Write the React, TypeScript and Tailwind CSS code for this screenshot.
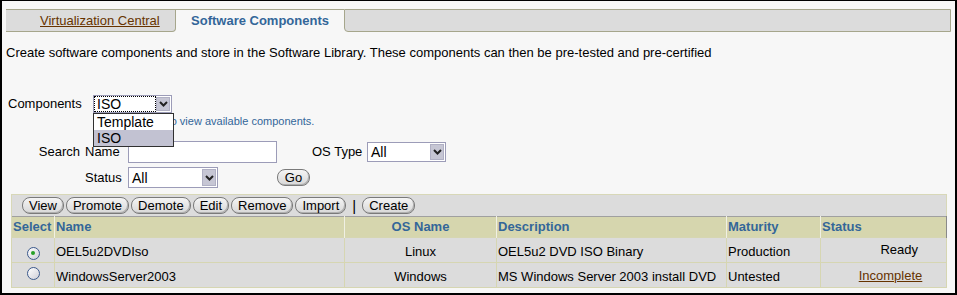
import React from 'react'

const font = { fontFamily: '"Liberation Sans", Arial, sans-serif' }

function Chevron() {
  return (
    <svg width="9" height="6" viewBox="0 0 9 6">
      <path d="M1 1 L4.5 4.5 L8 1" fill="none" stroke="#222" strokeWidth="2" />
    </svg>
  )
}

function FakeSelect({ value, w, h, focused }: { value: string; w: string; h: string; focused?: boolean }) {
  return (
    <div className={`flex border border-[#9c9cb8] bg-white ${w} ${h}`}>
      <div className={`flex flex-1 items-center pl-[3px] text-[14px] leading-none ${focused ? 'outline outline-1 outline-dotted outline-black -outline-offset-1' : ''}`}>
        {value}
      </div>
      <div className="my-[1px] mr-[1px] flex w-[14px] items-center justify-center border border-[#b0b0c4] bg-[#c6c6d4]">
        <Chevron />
      </div>
    </div>
  )
}

function Btn({ label }: { label: string }) {
  return (
    <button className="h-[17px] rounded-[8px] border border-[#7a7a7a] bg-gradient-to-b from-[#f4f4f4] to-[#d8d8d8] px-[6px] text-[13px] leading-none text-black shadow-[inset_-1px_-1px_0_#b0b0b0]">
      {label}
    </button>
  )
}

function Radio({ on }: { on?: boolean }) {
  return (
    <span className="inline-flex h-[13px] w-[13px] items-center justify-center rounded-full border border-[#3c5a8c] bg-gradient-to-br from-white to-[#cfcfd8]">
      {on && <span className="h-[4px] w-[4px] rounded-full bg-[#28a028]" />}
    </span>
  )
}

const rows = [
  { name: 'OEL5u2DVDIso', os: 'Linux', desc: 'OEL5u2 DVD ISO Binary', mat: 'Production', status: 'Ready', on: true },
  { name: 'WindowsServer2003', os: 'Windows', desc: 'MS Windows Server 2003 install DVD', mat: 'Untested', status: 'Incomplete' },
]

export default function App() {
  return (
    <div
      style={font}
      className="h-[295px] w-[957px] overflow-hidden border-t border-r-2 border-b-2 border-l-2 border-black bg-[#f7f7f7] text-[13px] text-black"
    >
      {/* tabs */}
      <div className="ml-[4px] mr-[4px] mt-[8px] flex h-[23px]">
        <div className="flex w-[170px] items-center rounded-br-[4px] border-t border-r border-b border-[#a6a68c] bg-[#dcdcdc] pl-[34px] text-[13px] text-[#663300] underline">
          Virtualization Central
        </div>
        <div className="flex w-[168px] items-center justify-center border-t border-[#a6a68c] text-[13px] font-bold text-[#336699]">
          Software Components
        </div>
        <div className="flex-1 rounded-bl-[4px] border border-[#a6a68c] bg-[#dcdcdc]" />
      </div>

      <p className="ml-[4px] mt-[13px] leading-[15px]">
        Create software components and store in the Software Library. These components can then be pre-tested and pre-certified
      </p>

      {/* components selector */}
      <div className="ml-[6px] mt-[35px] flex h-[18px] items-center">
        <span className="w-[85px]">Components</span>
        <div className="relative">
          <FakeSelect value="ISO" w="w-[79px]" h="h-[18px]" focused />
          <div className="absolute left-0 top-[18px] z-10 w-[81px] border border-[#303030] bg-white text-[14px] leading-[16px]">
            <div className="pl-[3px]">Template</div>
            <div className="bg-[#c2c2d2] pl-[3px]">ISO</div>
          </div>
        </div>
      </div>
      <div className="ml-[132px] mt-[2px] text-[11px] leading-[13px] text-[#336699]">
        Select to view available components.
      </div>

      {/* search */}
      <div className="mt-[13px] flex h-[22px] items-center">
        <span className="w-[78px] text-right">Search</span>
        <span className="ml-[5px] w-[43px]">Name</span>
        <input className="h-[22px] w-[149px] border border-[#9c9cb8] bg-white" />
        <span className="ml-[35px] w-[55px]">OS Type</span>
        <FakeSelect value="All" w="w-[79px]" h="h-[20px]" />
      </div>
      <div className="mt-[4px] flex h-[21px] items-center">
        <span className="ml-[83px] w-[43px]">Status</span>
        <FakeSelect value="All" w="w-[90px]" h="h-[21px]" />
        <div className="ml-[59px]">
          <button className="h-[17px] w-[33px] rounded-[8px] border border-[#7a7a7a] bg-gradient-to-b from-[#f4f4f4] to-[#d8d8d8] text-[13px] leading-none shadow-[inset_-1px_-1px_0_#b0b0b0]">
            Go
          </button>
        </div>
      </div>

      {/* table */}
      <div className="ml-[9px] mt-[6px] w-[936px]">
        <div className="flex h-[22px] items-center gap-[2px] border-x border-t border-[#d8d8b8] bg-[#dcdcdc] pl-[10px]">
          <Btn label="View" />
          <Btn label="Promote" />
          <Btn label="Demote" />
          <Btn label="Edit" />
          <Btn label="Remove" />
          <Btn label="Import" />
          <span className="mx-[4px] text-[15px] leading-none">|</span>
          <Btn label="Create" />
        </div>
        <table className="w-full border-collapse">
          <thead>
            <tr className="h-[21px] border-t border-b border-[#a0a0a0] bg-[#d6d6ae] text-left text-[13px] font-bold text-[#336699]">
              <th className="w-[43px] border-l border-[#d8d8b8] pl-[1px] text-left">Select</th>
              <th className="w-[290px] border-l border-[#f0f0e4] pl-[1px] text-left">Name</th>
              <th className="w-[152px] border-l border-[#f0f0e4] text-center">OS Name</th>
              <th className="w-[230px] border-l border-[#f0f0e4] pl-[1px] text-left">Description</th>
              <th className="w-[94px] border-l border-[#f0f0e4] pl-[1px] text-left">Maturity</th>
              <th className="border-l border-r border-[#f0f0e4] border-r-[#8a8a8a] pl-[1px] text-left">Status</th>
            </tr>
          </thead>
          <tbody>
            {rows.map((r) => (
              <tr key={r.name} className="h-[25px] bg-[#dcdcdc]">
                <td className="border border-[#d6d6b2] text-center">
                  <span className="relative top-[1px]"><Radio on={r.on} /></span>
                </td>
                <td className="border border-[#d6d6b2] pl-[1px] pt-[3px]">{r.name}</td>
                <td className="border border-[#d6d6b2] pt-[3px] text-center">{r.os}</td>
                <td className="border border-[#d6d6b2] pl-[1px] pt-[3px]">{r.desc}</td>
                <td className="border border-[#d6d6b2] pl-[1px] pt-[3px]">{r.mat}</td>
                <td className="border border-[#d6d6b2]">
                  {r.status === 'Ready' ? (
                    <div className="pr-[28px] text-right">Ready</div>
                  ) : (
                    <div className="pl-[14px] pt-[1px] text-center text-[#663300] underline">Incomplete</div>
                  )}
                </td>
              </tr>
            ))}
          </tbody>
        </table>
      </div>
    </div>
  )
}
